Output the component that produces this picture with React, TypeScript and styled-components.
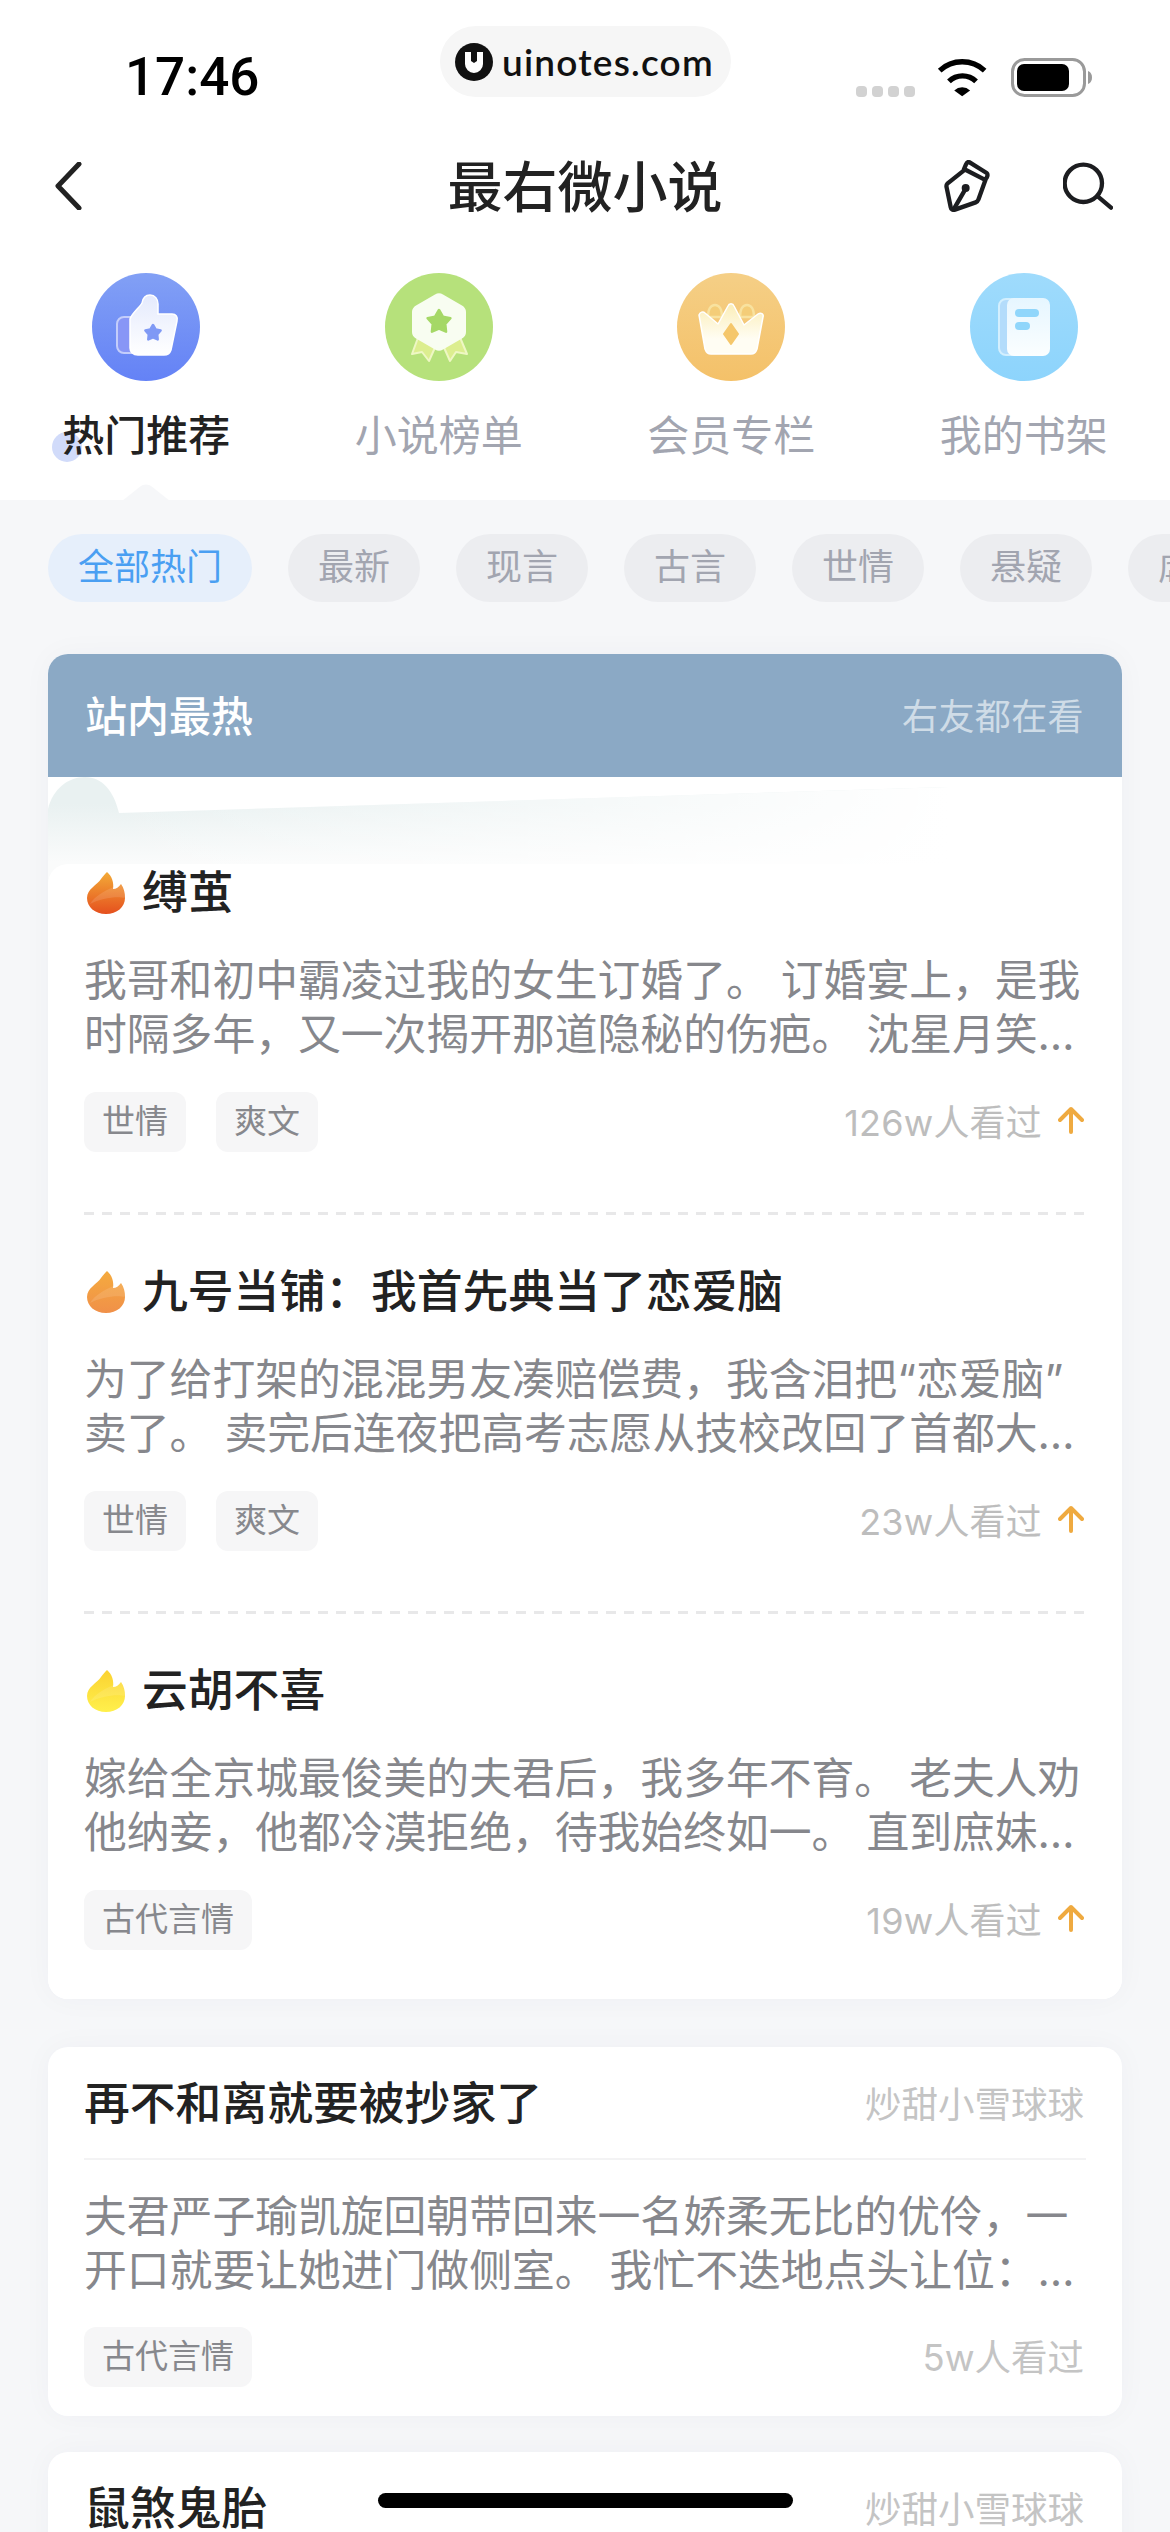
import { FC } from 'react';
import styled, { createGlobalStyle } from 'styled-components';

const GlobalStyle = createGlobalStyle`
  html, body {
    margin: 0;
    padding: 0;
    background: #fff;
  }

  body {
    font-family: Inter, "Noto Sans CJK SC", sans-serif;
  }
`;

const Screen = styled.div`
  position: relative;
  width: 1170px;
  height: 2532px;
  overflow: hidden;
  background: #f6f7f9;
`;

const Head = styled.header`
  background: #fff;
`;

const StatusBar = styled.div`
  display: flex;
  align-items: flex-start;
  height: 136px;
  padding-top: 26px;
  box-sizing: border-box;
`;

const Time = styled.div`
  width: 440px;
  box-sizing: border-box;
  padding: 25px 0 0 125px;
  font-family: Roboto, sans-serif;
  font-size: 53px;
  line-height: 52px;
  font-weight: 500;
  color: #000;
`;

const UrlPill = styled.div`
  display: flex;
  align-items: center;
  gap: 9px;
  width: 291px;
  height: 71px;
  padding-left: 15px;
  box-sizing: border-box;
  border-radius: 36px;
  background: #f6f6f6;
`;

const UrlText = styled.span`
  font-family: Lato, sans-serif;
  font-size: 37px;
  font-weight: 600;
  color: #111;
  letter-spacing: 1.2px;
`;

const StatusIcons = styled.div`
  display: flex;
  align-items: flex-end;
  height: 71px;
  padding-left: 125px;
`;

const SignalDots = styled.div`
  display: flex;
  gap: 5px;
  margin-right: 21px;
`;

const SignalDot = styled.span`
  width: 11px;
  height: 11px;
  border-radius: 4px;
  background: #d2d2d2;
`;

const NavBar = styled.nav`
  display: grid;
  grid-template-columns: 1fr auto 1fr;
  align-items: center;
  height: 100px;
  padding: 0 54px;
`;

const NavTitle = styled.h1`
  margin: 0;
  padding-top: 3px;
  font-size: 55px;
  line-height: 97px;
  font-weight: 500;
  color: #222;
`;

const NavIcons = styled.div`
  display: flex;
  align-items: center;
  justify-content: flex-end;
  gap: 72px;
  padding-right: 3px;
`;

const Tabs = styled.div`
  display: grid;
  grid-template-columns: repeat(4, 1fr);
  padding-top: 37px;
  height: 264px;
  box-sizing: border-box;
`;

const Tab = styled.div<{ $active?: boolean }>`
  position: relative;
  display: flex;
  flex-direction: column;
  align-items: center;

  ${({ $active }) =>
    $active &&
    `
    &::after {
      content: '';
      position: absolute;
      left: 50%;
      bottom: 0;
      width: 32px;
      height: 32px;
      border-radius: 8px 0 0 0;
      background: #f6f7f9;
      transform: translate(-50%, 50%) scaleY(0.8) rotate(45deg);
    }
  `}
`;

const TabLabel = styled.span<{ $active?: boolean }>`
  position: relative;
  margin-top: 30px;
  font-size: 42px;
  line-height: 50px;
  font-weight: ${({ $active }) => ($active ? 500 : 400)};
  color: ${({ $active }) => ($active ? '#222' : '#a2a5b0')};
`;

const TabDot = styled.span`
  position: absolute;
  left: -10px;
  top: 21px;
  width: 30px;
  height: 30px;
  border-radius: 50%;
  background: #d1dbfa;
  z-index: 0;
`;

const TabText = styled.span`
  position: relative;
  z-index: 1;
`;

const Filters = styled.div`
  display: flex;
  gap: 36px;
  padding: 34px 0 52px 48px;
  overflow: hidden;
`;

const Filter = styled.span<{ $active?: boolean }>`
  flex-shrink: 0;
  padding: 0 30px;
  height: 68px;
  line-height: 66px;
  border-radius: 34px;
  font-size: 36px;
  background: ${({ $active }) => ($active ? '#e6effb' : '#ecedf0')};
  color: ${({ $active }) => ($active ? '#4a9ff2' : '#a2a5b0')};
`;

const Cards = styled.main`
  display: flex;
  flex-direction: column;
  margin: 0 48px;
`;

const HotCard = styled.section`
  margin-bottom: 48px;
  border-radius: 20px;
  overflow: hidden;
  background: #fff;
  box-shadow: 0 0 30px rgba(40, 50, 80, 0.035);
`;

const HotHeader = styled.div`
  display: flex;
  align-items: center;
  justify-content: space-between;
  height: 123px;
  padding: 0 38px 4px 37px;
  box-sizing: border-box;
  background: #8ba9c5;
`;

const HotTitle = styled.span`
  font-size: 42px;
  font-weight: 500;
  color: #fff;
`;

const HotNote = styled.span`
  font-size: 36px;
  letter-spacing: 0.4px;
  color: rgba(255, 255, 255, 0.6);
`;

const HotBody = styled.div`
  position: relative;
  padding-top: 87px;
`;

const Ribbon = styled.svg`
  position: absolute;
  top: 0;
  left: 0;
`;

const HotList = styled.div`
  position: relative;
  padding: 0 36px 49px;
  border-radius: 20px 20px 0 0;
  background: #fff;
`;

const HotItem = styled.article`
  & + & {
    margin-top: 48px;
  }
`;

const HotTitleRow = styled.div`
  display: flex;
  align-items: center;
  gap: 17px;
  padding-left: 3px;
  height: 58px;
`;

const BookTitle = styled.h2`
  margin: 0;
  font-size: 45.8px;
  line-height: 58px;
  font-weight: 500;
  color: #222;
`;

const Summary = styled.p<{ $top?: number }>`
  display: -webkit-box;
  -webkit-box-orient: vertical;
  -webkit-line-clamp: 2;
  overflow: hidden;
  margin: ${({ $top }) => $top ?? 32}px 0 0;
  font-size: 42.8px;
  line-height: 54px;
  color: #86878c;
`;

const MetaRow = styled.div<{ $top?: number }>`
  display: flex;
  align-items: center;
  justify-content: space-between;
  margin-top: ${({ $top }) => $top ?? 30}px;
`;

const Tags = styled.div`
  display: flex;
  gap: 30px;
`;

const Tag = styled.span`
  height: 60px;
  padding: 0 18px;
  line-height: 58px;
  border-radius: 12px;
  font-size: 33px;
  color: #87888d;
  background: #f6f6f7;
`;

const Views = styled.div`
  display: flex;
  align-items: center;
  gap: 16px;
  padding: 0 2px 5px 0;
  font-size: 36px;
  letter-spacing: 0.2px;
  color: #bdbdbd;
`;

const DashLine = styled.div`
  height: 3px;
  margin-top: 60px;
  background: repeating-linear-gradient(90deg, #e8e8e9 0 10px, transparent 10px 18px);
`;

const BookCard = styled.section`
  margin-bottom: 36px;
  padding: 28px 36px 29px;
  border-radius: 20px;
  background: #fff;
  box-shadow: 0 0 30px rgba(40, 50, 80, 0.035);
`;

const BookHead = styled.div`
  display: flex;
  align-items: center;
  justify-content: space-between;
  padding-bottom: 25px;
  border-bottom: 2px solid #f3f3f4;
`;

const Author = styled.span`
  padding: 0 2px 4px 0;
  font-size: 36.5px;
  color: #c4c4c4;
`;

const HomeBar = styled.div`
  position: absolute;
  left: 378px;
  bottom: 24px;
  width: 415px;
  height: 15px;
  border-radius: 8px;
  background: #000;
`;

const LogoIcon = () => (
  <svg width="38" height="38" viewBox="0 0 38 38">
    <circle cx="19" cy="19" r="19" fill="#111" />
    <path d="M10 9h6v9l3 2 3-2V9h6v12a9 9 0 0 1-18 0z" fill="#fff" />
  </svg>
);

const WifiIcon = () => (
  <svg width="53" height="38" viewBox="45 25 160 115" style={{ marginRight: 22 }}>
    <g fill="none" stroke="#000" strokeWidth="16">
      <path d="M56 60A100 100 0 0 1 192 60" />
      <path d="M84 93A58 58 0 0 1 166 93" />
    </g>
    <path d="M100 120A36 36 0 0 1 148 120L124 138Z" fill="#000" />
  </svg>
);

const BatteryIcon = () => (
  <svg width="82" height="40" viewBox="0 0 82 40" style={{ marginBottom: -1 }}>
    <rect x="1.5" y="1.5" width="72" height="36" rx="12" fill="none" stroke="#9a9a9a" strokeWidth="3" />
    <rect x="6" y="6" width="52" height="27" rx="7" fill="#000" />
    <path d="M77 13c3 1 4 4 4 6.500s-1 5.500-4 6.500z" fill="#9a9a9a" />
  </svg>
);

const BackIcon = () => (
  <svg width="28" height="48" viewBox="0 0 28 48">
    <path d="M25 2L4 24L25 46" fill="none" stroke="#222" strokeWidth="5" strokeLinecap="round" strokeLinejoin="round" />
  </svg>
);

const PenIcon = () => (
  <svg width="47" height="52" viewBox="70 327 141 156">
    <g fill="none" stroke="#1c1d20" strokeWidth="13" strokeLinecap="round" strokeLinejoin="round">
      <path d="M130 358L80 398Q76 402 78 410L90 468Q92 479 103 476L165 454Q171 452 173 446L194 388" />
      <path d="M147 334L198 366Q203 371 198 380L192 386L130 354L136 340Q140 331 147 334z" />
      <path d="M102 470L132 418" />
    </g>
    <circle cx="135" cy="411" r="12" fill="#1c1d20" />
  </svg>
);

const SearchIcon = () => (
  <svg width="50" height="48" viewBox="429 336 150 144">
    <g fill="none" stroke="#1c1d20" strokeWidth="13" strokeLinecap="round">
      <circle cx="490" cy="400" r="56" />
      <path d="M534 440L573 473" />
    </g>
  </svg>
);

const Star: FC<{ cx: number; cy: number; r: number; fill: string }> = ({ cx, cy, r, fill }) => {
  const points = Array.from({ length: 10 }, (_, i) => {
    const radius = i % 2 === 0 ? r : r * 0.55;
    const angle = (Math.PI / 5) * i - Math.PI / 2;
    return `${cx + radius * Math.cos(angle)},${cy + radius * Math.sin(angle)}`;
  }).join(' ');

  return <polygon points={points} fill={fill} stroke={fill} strokeWidth="2.500" strokeLinejoin="round" />;
};

const ThumbIcon = () => (
  <svg width="108" height="108" viewBox="0 0 108 108">
    <defs>
      <linearGradient id="thumbBg" x1="0" y1="0" x2="0" y2="1">
        <stop offset="0" stopColor="#82a0f5" />
        <stop offset="1" stopColor="#6482f6" />
      </linearGradient>
      <linearGradient id="thumbFg" x1="0" y1="0" x2="0" y2="1">
        <stop offset="0" stopColor="#e4eafd" />
        <stop offset="1" stopColor="#ffffff" />
      </linearGradient>
    </defs>
    <circle cx="54" cy="54" r="54" fill="url(#thumbBg)" />
    <rect x="25" y="44" width="26" height="36" rx="7" fill="#8896f6" stroke="#c3cdfb" strokeWidth="2" />
    <path
      d="M38 46C40 40 48 34 50 30C51 24 54 22 58 22C63 22 66 26 66 31V41H80C84 41 86 44 85 48L79 77C78 80 76 82 72 82H46C41 82 38 79 38 75z"
      fill="url(#thumbFg)"
      stroke="#fff"
      strokeWidth="1.500"
    />
    <Star cx={61} cy={60} r={8} fill="#7f99f5" />
  </svg>
);

const MedalIcon = () => (
  <svg width="108" height="108" viewBox="0 0 108 108">
    <circle cx="54" cy="54" r="54" fill="#b6e17b" />
    <g fill="#dcee8f" stroke="#eef7c4" strokeWidth="2" strokeLinejoin="round">
      <path d="M34 62L27 81L37 79L44 88L52 70z" />
      <path d="M74 62L82 81L71 79L65 88L57 70z" />
    </g>
    <path
      d="M50 21.500Q54 19 58 21.500L77 32.500Q81 35 81 39V59Q81 63 77 65.500L58 76.500Q54 79 50 76.500L31 65.500Q27 63 27 59V39Q27 35 31 32.500z"
      fill="#f8fdf1"
    />
    <Star cx={54} cy={49} r={12} fill="#a5d866" />
  </svg>
);

const CrownIcon = () => (
  <svg width="108" height="108" viewBox="0 0 108 108">
    <defs>
      <linearGradient id="crownBg" x1="0" y1="0" x2="0" y2="1">
        <stop offset="0" stopColor="#f5cf86" />
        <stop offset="1" stopColor="#f4c169" />
      </linearGradient>
      <linearGradient id="crownFg" x1="0" y1="0" x2="0" y2="1">
        <stop offset="0" stopColor="#fbeeb8" />
        <stop offset="0.700" stopColor="#fffdf3" />
      </linearGradient>
    </defs>
    <circle cx="54" cy="54" r="54" fill="url(#crownBg)" />
    <g fill="#f4cd78" stroke="#f8e29f" strokeWidth="2.500">
      <path d="M31 44C31 36 34 32 38 32C42 32 45 36 45 44z" />
      <path d="M63 44C63 36 66 32 70 32C74 32 77 36 77 44z" />
    </g>
    <path
      d="M22 42C23 39 26 38 28 40L41 51L51 33C52 30 56 30 57 33L67 52L81 41C84 39 87 41 86 44L80 76C79 79 77 81 74 81H34C31 81 29 79 28 76z"
      fill="url(#crownFg)"
      stroke="#fff"
      strokeWidth="1.500"
      strokeLinejoin="round"
    />
    <path d="M54 51L61 61L54 71L47 61z" fill="#f5c76b" stroke="#f5c76b" strokeWidth="2" strokeLinejoin="round" />
  </svg>
);

const BookIcon = () => (
  <svg width="108" height="108" viewBox="0 0 108 108">
    <defs>
      <linearGradient id="bookBg" x1="0" y1="0" x2="0" y2="1">
        <stop offset="0" stopColor="#9fdbfc" />
        <stop offset="1" stopColor="#8dd4fc" />
      </linearGradient>
      <linearGradient id="bookFg" x1="0" y1="0" x2="0" y2="1">
        <stop offset="0" stopColor="#e6f6ff" />
        <stop offset="1" stopColor="#fbfeff" />
      </linearGradient>
    </defs>
    <circle cx="54" cy="54" r="54" fill="url(#bookBg)" />
    <rect x="29" y="26" width="30" height="56" rx="7" fill="#b3dcfb" stroke="#d3effe" strokeWidth="2" />
    <rect x="37" y="25" width="43" height="58" rx="7" fill="url(#bookFg)" />
    <rect x="45" y="36" width="24" height="8" rx="4" fill="#90d6fb" />
    <rect x="45" y="49" width="15" height="8" rx="4" fill="#90d6fb" />
  </svg>
);

const FlameIcon: FC<{ id: string; top: string; bottom: string }> = ({ id, top, bottom }) => (
  <svg width="38" height="42" viewBox="0 0 38 42">
    <defs>
      <linearGradient id={id} x1="0" y1="0" x2="0" y2="1">
        <stop offset="0" stopColor={top} />
        <stop offset="1" stopColor={bottom} />
      </linearGradient>
    </defs>
    <path
      d="M19 42C8 42 0 35 0 26C0 17 10 13 14 7C16 4 18 2 20 0C25 4 27 11 26 17C29 17 32 15 34 12C37 16 38 21 38 26C38 35 30 42 19 42z"
      fill={`url(#${id})`}
    />
    <path d="M3 32C8 24 18 18 34 12C37 16 38 21 38 26C30 24 14 26 3 32z" fill="#fff" opacity="0.12" />
  </svg>
);

const UpArrow = () => (
  <svg width="26" height="28" viewBox="0 0 26 28">
    <path d="M13 26V3M2 14L13 3L24 14" fill="none" stroke="#efaa40" strokeWidth="4" strokeLinecap="round" strokeLinejoin="round" />
  </svg>
);

const RIBBON_SHAPE = 'M0 32C5 12 20 0 37 0C54 0 66 14 71 36L900 10V107H0z';

const RibbonArt = () => (
  <Ribbon width="1074" height="107" viewBox="0 0 1074 107">
    <defs>
      <linearGradient id="ribbonV" x1="0" y1="0" x2="0" y2="1">
        <stop offset="0.250" stopColor="#e9f1f1" />
        <stop offset="0.800" stopColor="#fafbfb" />
      </linearGradient>
      <linearGradient id="ribbonH" gradientUnits="userSpaceOnUse" x1="60" y1="0" x2="900" y2="0">
        <stop offset="0" stopColor="#fff" stopOpacity="0" />
        <stop offset="1" stopColor="#fff" stopOpacity="1" />
      </linearGradient>
    </defs>
    <path d={RIBBON_SHAPE} fill="url(#ribbonV)" />
    <path d={RIBBON_SHAPE} fill="url(#ribbonH)" />
  </Ribbon>
);

const TAB_ITEMS = [
  { label: '热门推荐', icon: <ThumbIcon />, active: true },
  { label: '小说榜单', icon: <MedalIcon /> },
  { label: '会员专栏', icon: <CrownIcon /> },
  { label: '我的书架', icon: <BookIcon /> }
];

const FILTER_ITEMS = ['全部热门', '最新', '现言', '古言', '世情', '悬疑', '虐恋'];

const HOT_BOOKS = [
  {
    title: '缚茧',
    summary: '我哥和初中霸凌过我的女生订婚了。 订婚宴上，是我时隔多年，又一次揭开那道隐秘的伤疤。 沈星月笑着举起酒杯，朝我走了过来。',
    tags: ['世情', '爽文'],
    views: '126w人看过',
    flame: ['#f3ab38', '#e5501e']
  },
  {
    title: '九号当铺：我首先典当了恋爱脑',
    // zero width space: the line has to break right after the closing quote
    summary: '为了给打架的混混男友凑赔偿费，我含泪把“恋爱脑”\u200b卖了。 卖完后连夜把高考志愿从技校改回了首都大学，从此走上了人生巅峰。',
    tags: ['世情', '爽文'],
    views: '23w人看过',
    flame: ['#f5ab3e', '#f09049']
  },
  {
    title: '云胡不喜',
    summary: '嫁给全京城最俊美的夫君后，我多年不育。 老夫人劝他纳妾，他都冷漠拒绝，待我始终如一。 直到庶妹进府的那一天，一切都变了。',
    tags: ['古代言情'],
    views: '19w人看过',
    flame: ['#fbd231', '#fff04c']
  }
];

const App: FC = () => (
  <>
    <GlobalStyle />
    <Screen>
      <Head>
        <StatusBar>
          <Time>17:46</Time>
          <UrlPill>
            <LogoIcon />
            <UrlText>uinotes.com</UrlText>
          </UrlPill>
          <StatusIcons>
            <SignalDots>
              <SignalDot />
              <SignalDot />
              <SignalDot />
              <SignalDot />
            </SignalDots>
            <WifiIcon />
            <BatteryIcon />
          </StatusIcons>
        </StatusBar>
        <NavBar>
          <BackIcon />
          <NavTitle>最右微小说</NavTitle>
          <NavIcons>
            <PenIcon />
            <SearchIcon />
          </NavIcons>
        </NavBar>
        <Tabs>
          {TAB_ITEMS.map(({ label, icon, active }) => (
            <Tab key={label} $active={active}>
              {icon}
              <TabLabel $active={active}>
                {active && <TabDot />}
                <TabText>{label}</TabText>
              </TabLabel>
            </Tab>
          ))}
        </Tabs>
      </Head>
      <Filters>
        {FILTER_ITEMS.map((item, index) => (
          <Filter key={item} $active={index === 0}>
            {item}
          </Filter>
        ))}
      </Filters>
      <Cards>
        <HotCard>
          <HotHeader>
            <HotTitle>站内最热</HotTitle>
            <HotNote>右友都在看</HotNote>
          </HotHeader>
          <HotBody>
            <RibbonArt />
            <HotList>
              {HOT_BOOKS.map((book, index) => (
                <HotItem key={book.title}>
                  <HotTitleRow>
                    <FlameIcon id={`flame${index}`} top={book.flame[0]} bottom={book.flame[1]} />
                    <BookTitle>{book.title}</BookTitle>
                  </HotTitleRow>
                  <Summary>{book.summary}</Summary>
                  <MetaRow>
                    <Tags>
                      {book.tags.map(tag => (
                        <Tag key={tag}>{tag}</Tag>
                      ))}
                    </Tags>
                    <Views>
                      {book.views}
                      <UpArrow />
                    </Views>
                  </MetaRow>
                  {index < HOT_BOOKS.length - 1 && <DashLine />}
                </HotItem>
              ))}
            </HotList>
          </HotBody>
        </HotCard>
        <BookCard>
          <BookHead>
            <BookTitle>再不和离就要被抄家了</BookTitle>
            <Author>炒甜小雪球球</Author>
          </BookHead>
          <Summary $top={30}>
            夫君严子瑜凯旋回朝带回来一名娇柔无比的优伶，一开口就要让她进门做侧室。 我忙不迭地点头让位：这将军夫人谁爱当谁当。
          </Summary>
          <MetaRow $top={29}>
            <Tags>
              <Tag>古代言情</Tag>
            </Tags>
            <Author>5w人看过</Author>
          </MetaRow>
        </BookCard>
        <BookCard>
          <BookHead>
            <BookTitle>鼠煞鬼胎</BookTitle>
            <Author>炒甜小雪球球</Author>
          </BookHead>
        </BookCard>
      </Cards>
      <HomeBar />
    </Screen>
  </>
);

export default App;
